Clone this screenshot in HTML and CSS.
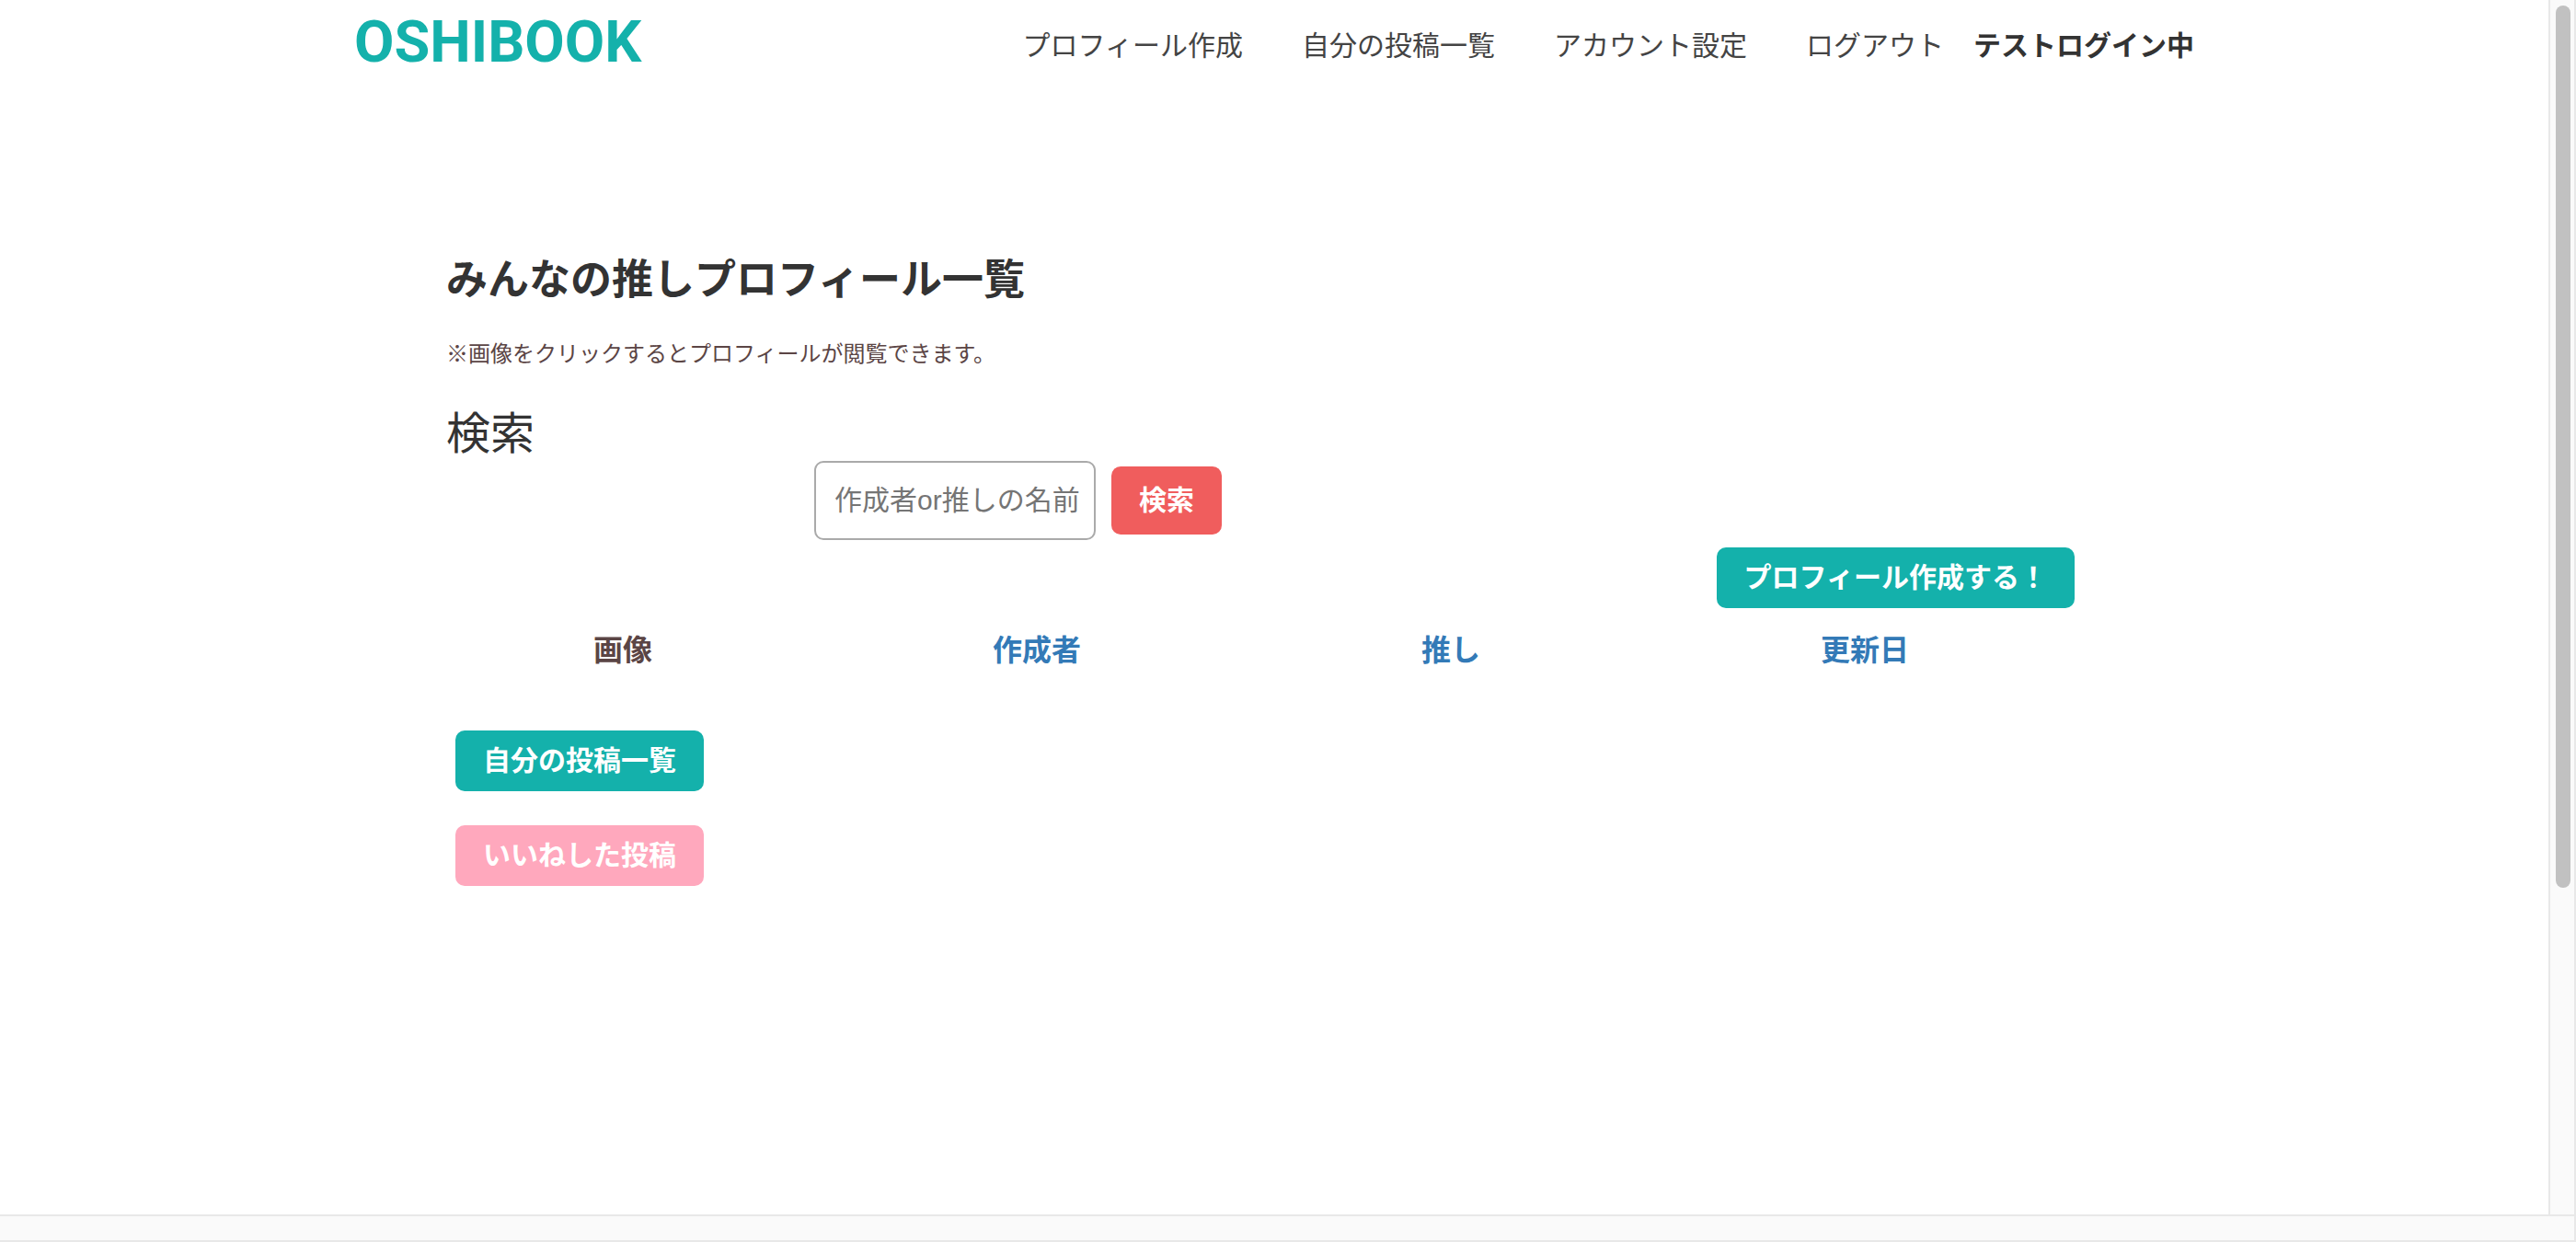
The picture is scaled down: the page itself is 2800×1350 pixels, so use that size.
FILE: index.html
```html
<!DOCTYPE html>
<html lang="ja">
<head>
<meta charset="utf-8">
<title>OSHIBOOK</title>
<link rel="stylesheet" href="styles.css">
</head>
<body>
<div class="window">
  <div class="page">
    <header class="header">
      <a class="logo" href="#">OSHIBOOK</a>
      <nav class="nav">
        <a href="#">プロフィール作成</a>
        <a href="#">自分の投稿一覧</a>
        <a href="#">アカウント設定</a>
        <a href="#">ログアウト</a>
        <strong class="status">テストログイン中</strong>
      </nav>
    </header>
    <main class="content">
      <h1 class="title">みんなの推しプロフィール一覧</h1>
      <p class="note">※画像をクリックするとプロフィールが閲覧できます。</p>
      <h2 class="subtitle">検索</h2>
      <form class="search">
        <input class="search-input" type="text" aria-label="作成者or推しの名前" placeholder="作成者or推しの名前">
        <button class="button button-search" type="submit">検索</button>
      </form>
      <div class="create">
        <a class="button" href="#">プロフィール作成する！</a>
      </div>
      <table class="profiles">
        <thead>
          <tr>
            <th scope="col">画像</th>
            <th scope="col"><a href="#">作成者</a></th>
            <th scope="col"><a href="#">推し</a></th>
            <th scope="col"><a href="#">更新日</a></th>
          </tr>
        </thead>
      </table>
      <div class="actions">
        <a class="button" href="#">自分の投稿一覧</a>
        <a class="button button-liked" href="#">いいねした投稿</a>
      </div>
    </main>
  </div>
  <div class="scroll-y"><div class="thumb"></div></div>
  <div class="scroll-x"></div>
</div>
</body>
</html>
```
FILE: styles.css
```css
* {
  box-sizing: border-box;
}

body {
  margin: 0;
  background: #fff;
  color: #5b4545;
  font-family: "Arial Narrow", "Liberation Sans", "Noto Sans CJK JP", sans-serif;
  font-size: 30px;
  line-height: 44px;
}

a {
  color: #337ab7;
  text-decoration: none;
}

.window {
  display: grid;
  grid-template-columns: minmax(0, 1fr) 30px;
  grid-template-rows: minmax(0, 1fr) 30px;
  min-height: 100vh;
}

.page {
  padding: 0 24px;
}

.header {
  display: flex;
  align-items: center;
  justify-content: space-between;
  max-width: 2000px;
  height: 100px;
  margin: 0 auto;
}

.logo {
  padding-bottom: 8px;
  color: #14b1ab;
  font-family: Roboto, "Liberation Sans", sans-serif;
  font-size: 63px;
  font-weight: bold;
  line-height: 88px;
}

.nav {
  display: flex;
  align-items: center;
  gap: 64px;
}

.nav a {
  color: #444;
}

.nav .status {
  margin-left: -32px;
  color: #333;
}

.content {
  max-width: 1800px;
  margin: 0 auto;
  padding-top: 172px;
}

.title,
.subtitle,
.note {
  margin: 0;
  color: #333;
}

.title {
  font-size: 45px;
  line-height: 66px;
}

.note {
  margin-top: 29px;
  color: #5b4545;
  font-size: 24px;
  line-height: 36px;
}

.subtitle {
  margin-top: 40px;
  font-size: 48px;
  font-weight: normal;
  line-height: 58px;
}

.search {
  display: flex;
  align-items: center;
  gap: 17px;
  margin-left: 400px;
}

.search-input {
  width: 306px;
  height: 86px;
  padding: 0 0 0 20px;
  border: 2px solid #aaa;
  border-radius: 10px;
  background: #fff;
  font: inherit;
}

.search-input::placeholder {
  color: #757575;
  opacity: 1;
}

.button {
  display: block;
  padding: 11px 30px;
  border: 0;
  border-radius: 10px;
  background: #14b1ab;
  color: #fff;
  font: inherit;
  font-weight: bold;
}

.button-search {
  padding: 15px 30px;
  background: #f05d5d;
}

.button-liked {
  background: #ffa8bd;
}

.create {
  display: flex;
  justify-content: flex-end;
  margin-top: 8px;
  padding-right: 30px;
}

.profiles {
  width: 100%;
  margin-left: -33px;
  border-collapse: collapse;
  table-layout: fixed;
}

.profiles th {
  padding: 24px 0;
  font-size: 32px;
}

.actions {
  display: flex;
  flex-direction: column;
  align-items: flex-start;
  gap: 37px;
  margin: 41px 0 0 10px;
}

.scroll-y {
  padding: 6px 4px 0 6px;
  border: solid #e8e8e8;
  border-width: 0 2px;
  background: #fafafa;
}

.thumb {
  height: 73%;
  border-radius: 8px;
  background: #c1c1c1;
}

.scroll-x {
  grid-column: 1 / -1;
  border: solid #e8e8e8;
  border-width: 2px 2px 2px 0;
  background: #fafafa;
}
```
